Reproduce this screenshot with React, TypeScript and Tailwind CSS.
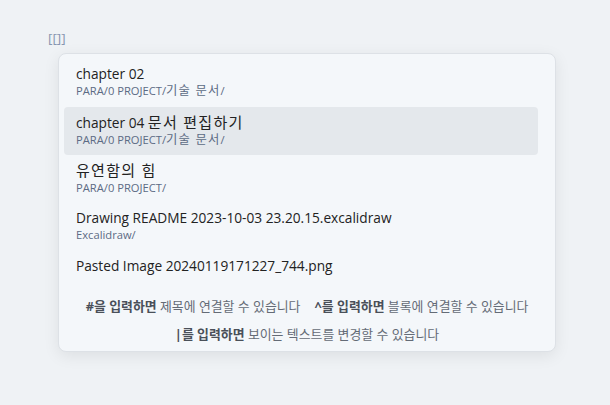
import React from "react";

const items = [
  { title: "chapter 02", path: "PARA/0 PROJECT/기술 문서/" },
  { title: "chapter 04 문서 편집하기", path: "PARA/0 PROJECT/기술 문서/", active: true },
  { title: "유연함의 힘", path: "PARA/0 PROJECT/" },
  { title: "Drawing README 2023-10-03 23.20.15.excalidraw", path: "Excalidraw/" },
  { title: "Pasted Image 20240119171227_744.png" },
];

// Korean runs get their own size so the widths line up with the reference
function Ko({ text, className }: { text: string; className: string }) {
  const parts = text.split(/([\uAC00-\uD7A3]+(?:\s+[\uAC00-\uD7A3]+)*)/);
  return (
    <>
      {parts.map((p, i) =>
        /[\uAC00-\uD7A3]/.test(p) ? (
          <span key={i} className={className}>
            {p}
          </span>
        ) : (
          p
        )
      )}
    </>
  );
}

function Item({ title, path, active }: { title: string; path?: string; active?: boolean }) {
  return (
    <div className={`flex flex-col rounded-[4px] px-3 pt-[6px] ${path ? "h-[48px]" : "h-[30px]"} ${active ? "bg-[#e4e8ec]" : ""}`}>
      <div className="text-[13.7px] leading-[18px] text-[#222] whitespace-nowrap">
        <Ko text={title} className="text-[15px] tracking-[1.3px]" />
      </div>
      {path && (
        <div className="text-[11.2px] leading-[15px] text-[#5c6b84] whitespace-nowrap">
          <Ko text={path} className="text-[12.3px] tracking-[1.2px]" />
        </div>
      )}
    </div>
  );
}

export default function App() {
  return (
    <div
      className="w-[610px] h-[405px] bg-[#eff2f5] pt-[30px] pl-[48px]"
      style={{ fontFamily: '"Open Sans", "Noto Sans CJK KR", sans-serif' }}
    >
      <div className="text-[13.5px] leading-[16px] text-[#8796b0]">[[]]</div>
      <div className="mt-[7px] ml-[10px] w-[498px] rounded-[8px] border border-[#dde1e6] bg-[#f4f7fa] shadow-[0_4px_16px_rgba(0,0,0,0.08)] pt-[5px] pb-[8px]">
        <div className="flex flex-col pl-[5px] pr-[17px]">
          {items.map((it) => (
            <Item key={it.title} {...it} />
          ))}
        </div>
        <div className="mt-[16px] flex flex-col items-center gap-[10px] text-[12.9px] leading-[18px] text-[#646b76] whitespace-nowrap">
          <div className="flex gap-[14px]">
            <span>
              <b className="text-[#4a5059]">#을 입력하면</b> 제목에 연결할 수 있습니다
            </span>
            <span>
              <b className="text-[#4a5059]">^를 입력하면</b> 블록에 연결할 수 있습니다
            </span>
          </div>
          <div>
            <b className="text-[#4a5059]">|를 입력하면</b> 보이는 텍스트를 변경할 수 있습니다
          </div>
        </div>
      </div>
    </div>
  );
}
